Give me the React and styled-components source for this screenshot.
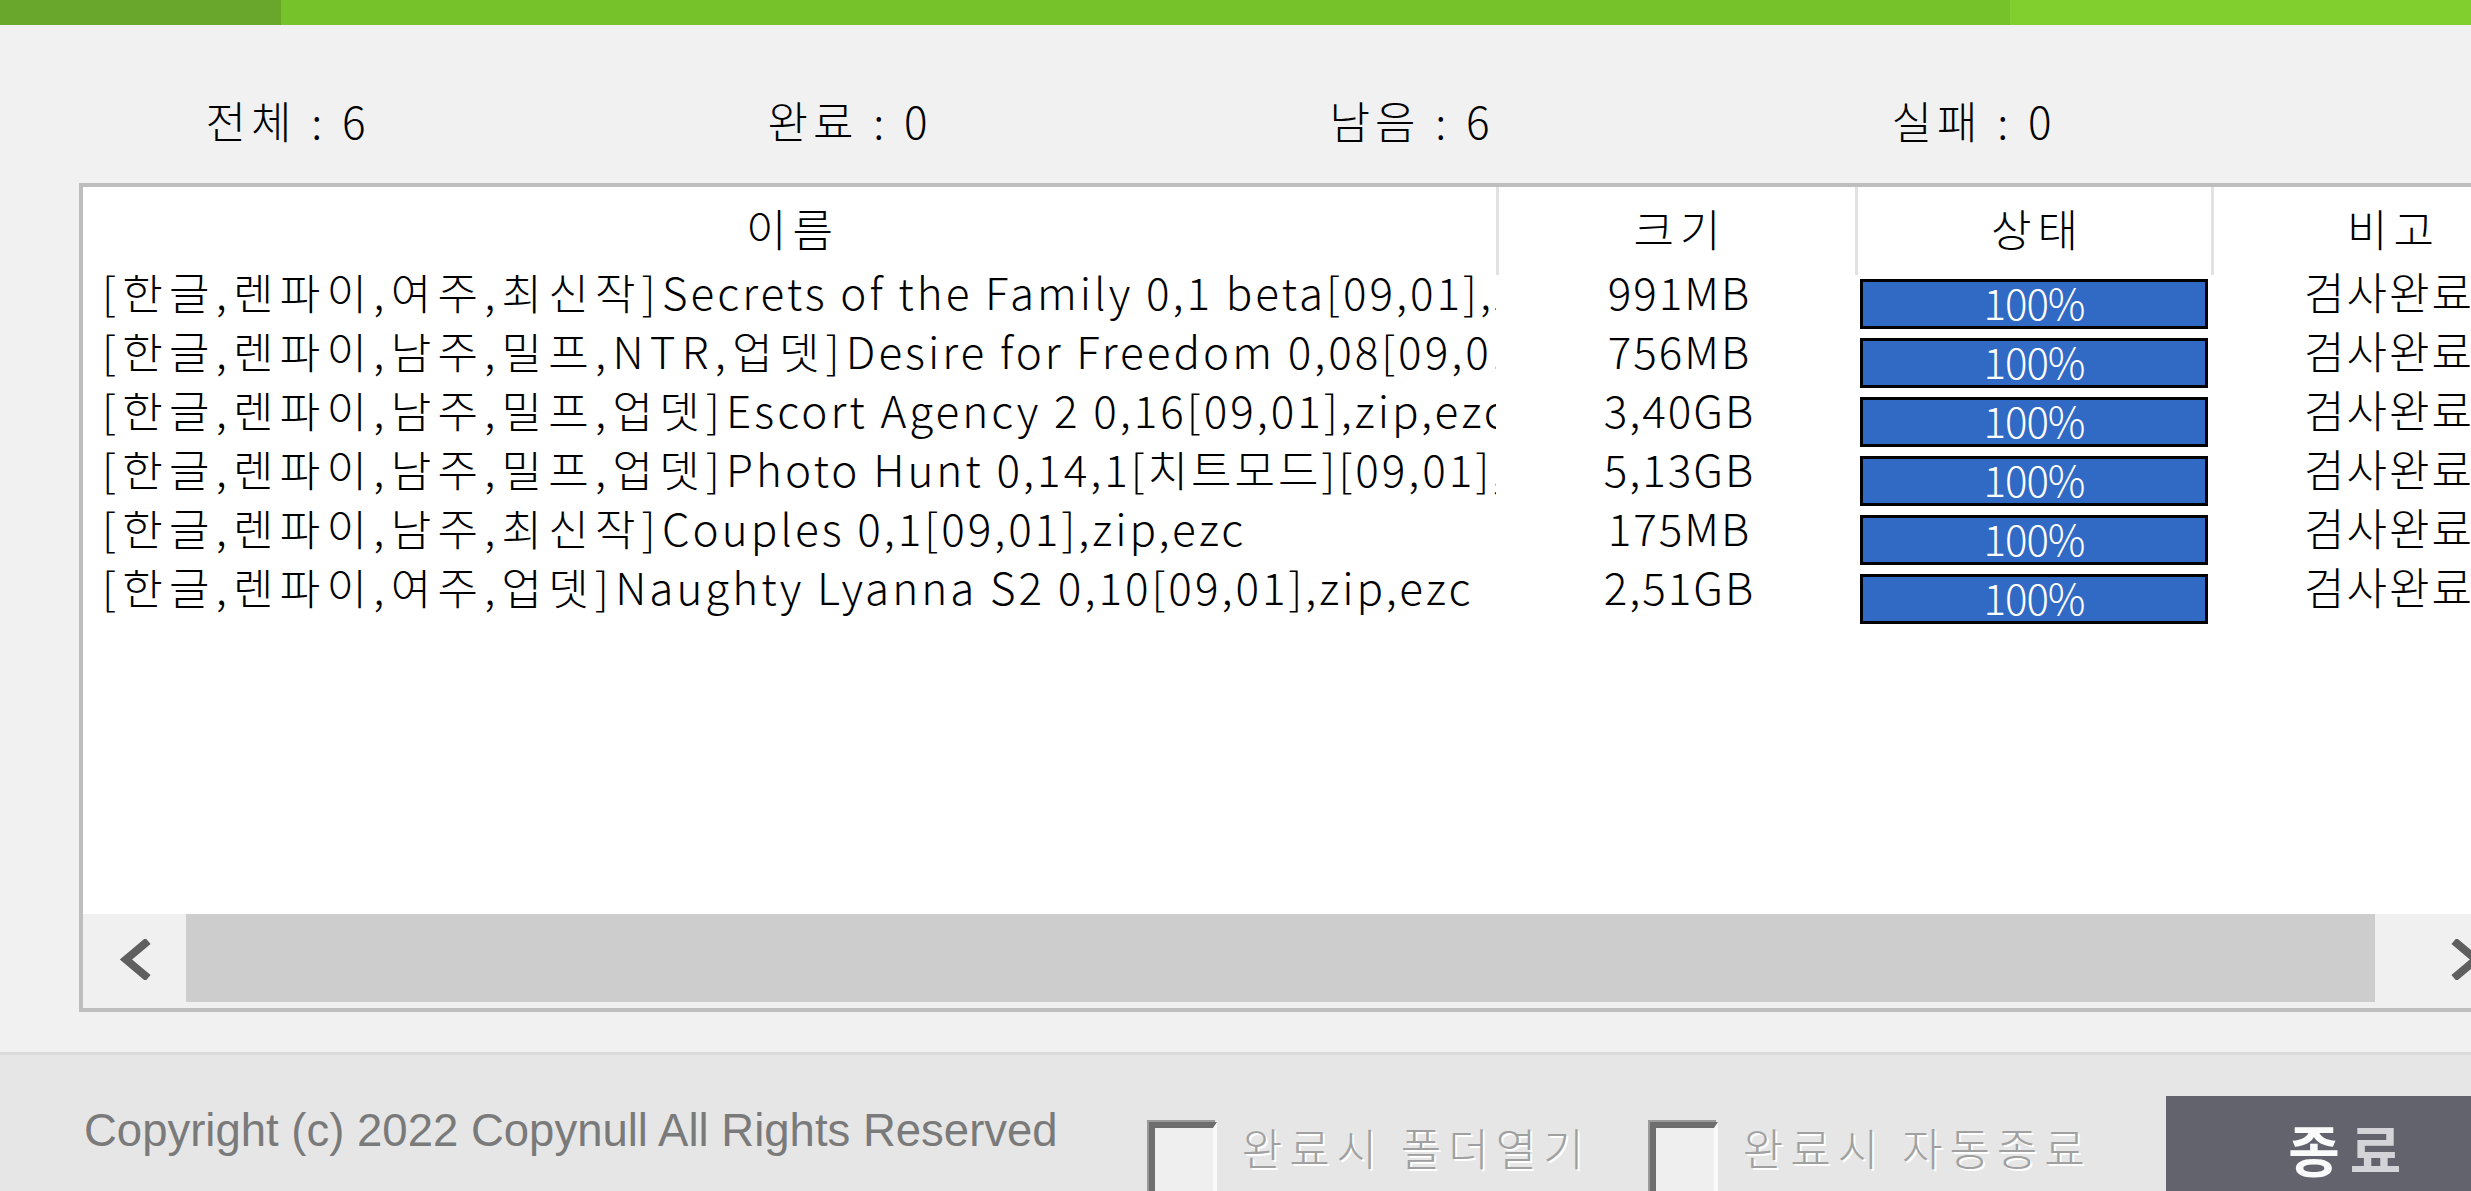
import React from 'react'
import styled, { createGlobalStyle } from 'styled-components'

const files = [
  { tags: '[한글,렌파이,여주,최신작]', title: 'Secrets of the Family 0,1 beta[09,01],zip,ezc', size: '991MB' },
  { tags: '[한글,렌파이,남주,밀프,NTR,업뎃]', title: 'Desire for Freedom 0,08[09,01],zip,ezc', size: '756MB' },
  { tags: '[한글,렌파이,남주,밀프,업뎃]', title: 'Escort Agency 2 0,16[09,01],zip,ezc', size: '3,40GB' },
  { tags: '[한글,렌파이,남주,밀프,업뎃]', title: 'Photo Hunt 0,14,1[치트모드][09,01],zip,ezc', size: '5,13GB' },
  { tags: '[한글,렌파이,남주,최신작]', title: 'Couples 0,1[09,01],zip,ezc', size: '175MB' },
  { tags: '[한글,렌파이,여주,업뎃]', title: 'Naughty Lyanna S2 0,10[09,01],zip,ezc', size: '2,51GB' },
]

const stats = [
  ['전체', 6],
  ['완료', 0],
  ['남음', 6],
  ['실패', 0],
]

const App = () => {
  return (
    <Window>
      <GlobalStyle />
      <TopBar>
        <BarSegment $color="#68a72c" $width="281px" />
        <BarSegment $color="#76c22a" />
        <BarSegment $color="#80cf2f" $width="461px" />
      </TopBar>

      <Stats>
        {stats.map(([label, n]) => (
          <Stat key={label}>{label} : {n}</Stat>
        ))}
      </Stats>

      <ListBox>
        <HeaderRow>
          <HeadCell>이름</HeadCell>
          <HeadCell $divider>크기</HeadCell>
          <HeadCell $divider>상태</HeadCell>
          <HeadCell $divider>비고</HeadCell>
        </HeaderRow>
        <Rows>
          {files.map(f => (
            <Row key={f.title}>
              <NameCell>
                <Tags>{f.tags}</Tags>
                {f.title}
              </NameCell>
              <TextCell $shift="8px">{f.size}</TextCell>
              <BarCell>
                <Progress>100%</Progress>
              </BarCell>
              <TextCell>검사완료</TextCell>
            </Row>
          ))}
        </Rows>
        <ScrollBar>
          <ScrollButton>
            <svg width="36" height="41" viewBox="0 0 36 41">
              <polyline points="31,2 9,20.5 31,39" fill="none" stroke="#5f5f5f" strokeWidth="8" />
            </svg>
          </ScrollButton>
          <Thumb />
          <ScrollButton $right>
            <svg width="36" height="41" viewBox="0 0 36 41">
              <polyline points="5,2 27,20.5 5,39" fill="none" stroke="#5f5f5f" strokeWidth="8" />
            </svg>
          </ScrollButton>
        </ScrollBar>
        <ScrollStrip />
      </ListBox>

      <Footer>
        <Copyright>Copyright (c) 2022 Copynull All Rights Reserved</Copyright>
        <CheckBox $left="91px" />
        <CheckLabel>완료시 폴더열기</CheckLabel>
        <CheckBox $left="59px" />
        <CheckLabel>완료시 자동종료</CheckLabel>
        <CloseButton>
          종<Dim>료</Dim>
        </CloseButton>
      </Footer>
    </Window>
  )
}

const GlobalStyle = createGlobalStyle`
  body {
    margin: 0;
    background: #f1f1f1;
    overflow: hidden;
  }
`

const Window = styled.div`
  width: 2471px;
  height: 1191px;
  display: flex;
  flex-direction: column;
  overflow: hidden;
  background: #f1f1f1;
  font-family: "Noto Sans CJK KR", "Noto Sans", sans-serif;
  font-weight: 300;
  color: #000;
`

const TopBar = styled.div`
  display: flex;
  height: 25px;
  flex: none;
`

const BarSegment = styled.div`
  background: ${p => p.$color};
  width: ${p => p.$width || 'auto'};
  flex: ${p => (p.$width ? 'none' : '1')};
`

const Stats = styled.div`
  display: grid;
  grid-template-columns: repeat(4, 562px);
  justify-items: center;
  align-items: center;
  height: 158px;
  padding: 32px 0 0 7px;
  box-sizing: border-box;
  flex: none;
`

const Stat = styled.div`
  font-size: 44px;
  line-height: 48px;
  letter-spacing: 5px;
  white-space: pre;
`

const ListBox = styled.div`
  margin-left: 79px;
  width: 2520px;
  height: 829px;
  border: 4px solid #bebebe;
  box-sizing: border-box;
  background: #fff;
  display: flex;
  flex-direction: column;
  flex: none;
`

const columns = '1413px 359px 356px 356px'

const HeaderRow = styled.div`
  display: grid;
  grid-template-columns: ${columns};
  height: 88px;
  flex: none;
`

const HeadCell = styled.div`
  display: flex;
  align-items: center;
  justify-content: center;
  font-size: 44px;
  letter-spacing: 6px;
  padding: 0 0 6px 6px;
  box-sizing: border-box;
  border-left: ${p => (p.$divider ? '3px solid #e2e2e2' : 'none')};
`

const Rows = styled.div`
  flex: 1;
`

const Row = styled.div`
  display: grid;
  grid-template-columns: ${columns};
  height: 59px;
`

const NameCell = styled.div`
  font-size: 44px;
  line-height: 44px;
  letter-spacing: 3px;
  padding: 0 0 28px 19px;
  white-space: pre;
  overflow: hidden;
  display: flex;
  align-items: center;
  box-sizing: border-box;
  height: 59px;
`

const Tags = styled.span`
  letter-spacing: 6.3px;
`

const TextCell = styled.div`
  font-size: 44px;
  line-height: 44px;
  letter-spacing: 2px;
  white-space: nowrap;
  display: flex;
  align-items: center;
  justify-content: center;
  padding: 0 0 28px ${p => p.$shift || '0'};
  box-sizing: border-box;
  height: 59px;
`

const BarCell = styled.div`
  display: flex;
  padding: 4px 0 0 5px;
`

const Progress = styled.div`
  width: 348px;
  height: 50px;
  box-sizing: border-box;
  border: 3px solid #000;
  background: #316ac5;
  color: #fff;
  font-size: 42px;
  line-height: 42px;
  letter-spacing: -1px;
  display: flex;
  justify-content: center;
  align-items: center;
  padding-bottom: 4px;
`

const ScrollBar = styled.div`
  display: flex;
  height: 88px;
  flex: none;
  background: #f0f0f0;
`

const ScrollButton = styled.div`
  width: ${p => (p.$right ? 'auto' : '103px')};
  flex: ${p => (p.$right ? '1' : 'none')};
  display: flex;
  align-items: center;
  justify-content: ${p => (p.$right ? 'flex-start' : 'center')};
  padding-left: ${p => (p.$right ? '74px' : '0')};
  padding-top: 2px;
  box-sizing: border-box;
`

const Thumb = styled.div`
  width: 2189px;
  flex: none;
  background: #cdcdcd;
`

const ScrollStrip = styled.div`
  height: 6px;
  flex: none;
  background: #f0f0f0;
`

const Footer = styled.div`
  margin-top: 40px;
  border-top: 3px solid #dadada;
  background: #e6e6e6;
  flex: 1;
  display: flex;
  align-items: flex-start;
  padding-left: 84px;
`

const Copyright = styled.div`
  font-family: "Liberation Sans", Arial, sans-serif;
  font-size: 45.5px;
  line-height: 52px;
  margin-top: 50px;
  color: #7a7a7a;
  white-space: nowrap;
`

const CheckBox = styled.div`
  width: 68px;
  height: 80px;
  margin: 67px 25px 0 ${p => p.$left};
  box-sizing: border-box;
  background: #efefef;
  border-top: 6px solid #6e6e6e;
  border-left: 6px solid #6e6e6e;
  border-right: 4px solid #fafafa;
  box-shadow: -2px -2px 0 #9a9a9a;
  flex: none;
`

const CheckLabel = styled.div`
  font-size: 44px;
  line-height: 52px;
  margin-top: 66px;
  color: #a0a0a0;
  text-shadow: 2px 2px 0 #ffffff;
  letter-spacing: 7px;
  white-space: nowrap;
`

const CloseButton = styled.div`
  margin: 41px 0 0 74px;
  width: 358px;
  height: 102px;
  flex: none;
  background: #63636e;
  color: #fafafa;
  font-size: 56px;
  font-weight: bold;
  display: flex;
  align-items: center;
  justify-content: center;
  letter-spacing: 10px;
  padding-left: 10px;
  box-sizing: border-box;
`

const Dim = styled.span`
  color: #d4d4d8;
`

export default App
